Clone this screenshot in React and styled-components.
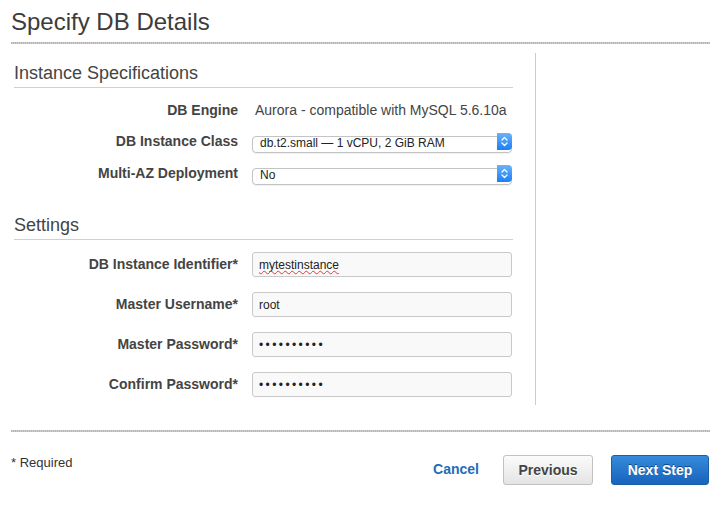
import React from "react";
import styled, { createGlobalStyle } from "styled-components";

const GlobalStyle = createGlobalStyle`
  body {
    margin: 0;
    background: #ffffff;
    font-family: "Liberation Sans", Helvetica, Arial, sans-serif;
    color: #444444;
  }
`;

const SPage = styled.div`
  width: 715px;
  height: 508px;
  box-sizing: border-box;
  padding: 8px 5px 0 11px;
  overflow: hidden;
`;

const STitle = styled.h1`
  margin: 0;
  font-size: 24px;
  line-height: 28px;
  font-weight: 400;
  color: #3c3c3c;
`;

const SRule = styled.div`
  height: 2px;
  margin-top: ${(p) => p.$top}px;
  background: repeating-linear-gradient(90deg, #b4b4b4 0 1px, #cdcdcd 1px 2px);
`;

const SMain = styled.div`
  display: flex;
  margin-top: 9px;
`;

const SFormCol = styled.div`
  width: 525px;
  box-sizing: border-box;
  border-right: 1px solid #cccccc;
  padding: 0 22px 8px 3px;
`;

const SHeading = styled.h2`
  margin: ${(p) => p.$top}px 0 0;
  padding-bottom: 3px;
  border-bottom: 1px solid #d0d0d0;
  font-size: 18px;
  line-height: 22px;
  font-weight: 400;
  color: #444444;
`;

const SGroup = styled.div`
  display: flex;
  flex-direction: column;
  padding-top: ${(p) => p.$top}px;
  gap: ${(p) => p.$gap || 0}px;
`;

const SRow = styled.div`
  display: grid;
  grid-template-columns: 224px 260px;
  column-gap: 14px;
  align-items: center;
  height: ${(p) => p.$h}px;
`;

const SLabel = styled.label`
  text-align: right;
  font-size: 14px;
  line-height: 17px;
  font-weight: 700;
  color: #444444;
`;

const SValue = styled.span`
  padding-left: 3px;
  font-size: 14px;
  line-height: 17px;
  color: #444444;
  white-space: nowrap;
`;

const SSelectWrap = styled.div`
  position: relative;
  width: 260px;
  height: 17px;
`;

const SSelect = styled.select`
  appearance: none;
  width: 100%;
  height: 17px;
  box-sizing: border-box;
  margin: 0;
  padding: 0 20px 2px 7px;
  border: 1px solid #c4c4c4;
  border-radius: 4px;
  background: #ffffff;
  box-shadow: 0 1px 1px rgba(0, 0, 0, 0.06);
  font-family: inherit;
  font-size: 12px;
  line-height: 13px;
  color: #222222;
`;

const SStepper = styled.span`
  position: absolute;
  top: 0;
  right: 0;
  width: 15px;
  height: 17px;
  border-radius: 0 4px 4px 0;
  background: linear-gradient(#6ab2fb, #1b7ff5);
  display: flex;
  align-items: center;
  justify-content: center;
  pointer-events: none;
`;

const SInputWrap = styled.div`
  position: relative;
  width: 260px;
  height: 25px;
`;

const SInput = styled.input`
  width: 260px;
  height: 25px;
  box-sizing: border-box;
  margin: 0;
  padding: 0 6px;
  border: 1px solid #c9c9c9;
  border-radius: 3px;
  background: #f9f9f9;
  font-family: inherit;
  font-size: 12px;
  color: #222222;
  letter-spacing: ${(p) => (p.type === "password" ? "2.4px" : "normal")};
`;

/* spell-check squiggle laid over the input text */
const SSpellMark = styled.span`
  position: absolute;
  left: 7px;
  top: 5px;
  font-size: 12px;
  line-height: 15px;
  color: transparent;
  text-decoration: underline wavy #e03a3a;
  text-decoration-thickness: 1px;
  text-underline-offset: 2px;
  pointer-events: none;
  white-space: nowrap;
`;

const SFooter = styled.div`
  display: flex;
  justify-content: space-between;
  align-items: flex-start;
  margin-top: 23px;
`;

const SRequired = styled.span`
  font-size: 13px;
  line-height: 15px;
  color: #333333;
`;

const SActions = styled.div`
  display: flex;
  align-items: center;
  margin-right: 1px;
`;

const SCancel = styled.a`
  margin: 0 24px 3px 0;
  font-size: 14px;
  font-weight: 700;
  color: #1e6db8;
  text-decoration: none;
  cursor: pointer;
`;

const SButton = styled.button`
  width: ${(p) => p.$w}px;
  height: 30px;
  margin-left: ${(p) => p.$gap || 0}px;
  border-radius: 3px;
  font-family: inherit;
  font-size: 14px;
  font-weight: 700;
  cursor: pointer;

  &.secondary {
    border: 1px solid #c2c2c2;
    background: linear-gradient(#fbfbfb, #e4e4e4);
    color: #444444;
    text-shadow: 0 1px 0 #ffffff;
  }

  &.primary {
    border: 1px solid #1c5fa6;
    background: linear-gradient(#368bdb, #1763bd);
    color: #ffffff;
    text-shadow: 0 -1px 0 #0f4783;
  }
`;

const Stepper = () => (
  <SStepper>
    <svg width="9" height="13" viewBox="0 0 9 13" fill="none" stroke="#ffffff" strokeWidth="1.3" strokeLinecap="round" strokeLinejoin="round">
      <path d="M2 5 L4.5 2.5 L7 5" />
      <path d="M2 8 L4.5 10.5 L7 8" />
    </svg>
  </SStepper>
);

const SelectField = ({ value, options }) => (
  <SSelectWrap>
    <SSelect defaultValue={value}>
      {options.map((o) => (
        <option key={o}>{o}</option>
      ))}
    </SSelect>
    <Stepper />
  </SSelectWrap>
);

const TextField = ({ value, type, spell }) => (
  <SInputWrap>
    <SInput type={type || "text"} defaultValue={value} spellCheck={false} />
    {spell && <SSpellMark aria-hidden="true">{value}</SSpellMark>}
  </SInputWrap>
);

const App = () => {
  const settings = [
    { label: "DB Instance Identifier*", value: "mytestinstance", spell: true },
    { label: "Master Username*", value: "root" },
    { label: "Master Password*", value: "abcdefghij", type: "password" },
    { label: "Confirm Password*", value: "abcdefghij", type: "password" },
  ];

  return (
    <>
      <GlobalStyle />
      <SPage>
        <STitle>Specify DB Details</STitle>
        <SRule $top={6} />
        <SMain>
          <SFormCol>
            <SHeading $top={9}>Instance Specifications</SHeading>
            <SGroup $top={7}>
              <SRow $h={30}>
                <SLabel>DB Engine</SLabel>
                <SValue>Aurora - compatible with MySQL 5.6.10a</SValue>
              </SRow>
              <SRow $h={32}>
                <SLabel>DB Instance Class</SLabel>
                <SelectField
                  value="db.t2.small — 1 vCPU, 2 GiB RAM"
                  options={["db.t2.small — 1 vCPU, 2 GiB RAM", "db.t2.medium — 2 vCPU, 4 GiB RAM"]}
                />
              </SRow>
              <SRow $h={32}>
                <SLabel>Multi-AZ Deployment</SLabel>
                <SelectField value="No" options={["No", "Yes"]} />
              </SRow>
            </SGroup>
            <SHeading $top={25}>Settings</SHeading>
            <SGroup $top={12} $gap={15}>
              {settings.map((s) => (
                <SRow key={s.label} $h={25}>
                  <SLabel>{s.label}</SLabel>
                  <TextField value={s.value} type={s.type} spell={s.spell} />
                </SRow>
              ))}
            </SGroup>
          </SFormCol>
        </SMain>
        <SRule $top={25} />
        <SFooter>
          <SRequired>* Required</SRequired>
          <SActions>
            <SCancel>Cancel</SCancel>
            <SButton className="secondary" $w={90}>Previous</SButton>
            <SButton className="primary" $w={98} $gap={18}>Next Step</SButton>
          </SActions>
        </SFooter>
      </SPage>
    </>
  );
};

export default App;
